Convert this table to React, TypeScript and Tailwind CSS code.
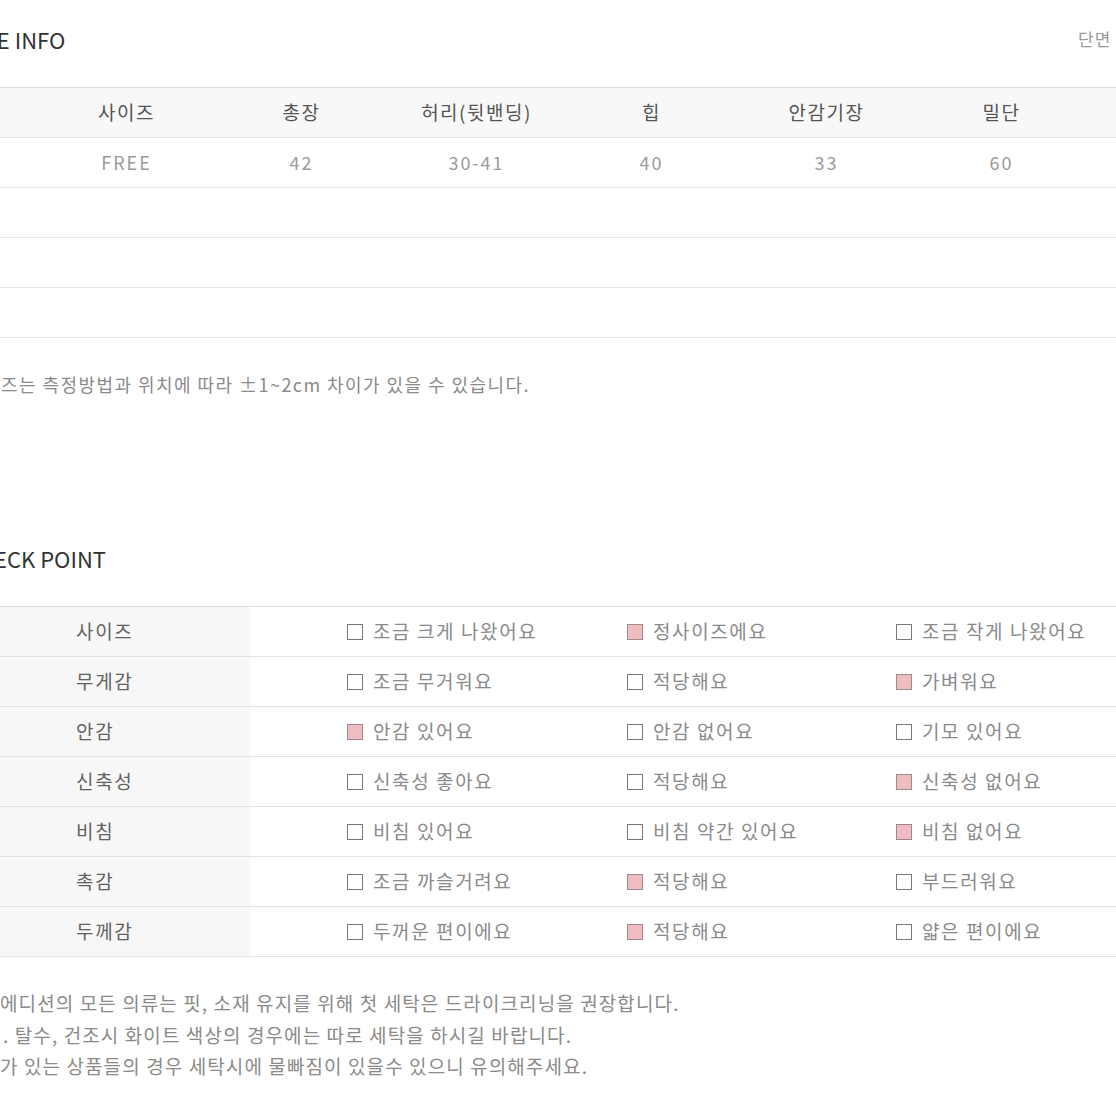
import React from "react";

const font = { fontFamily: '"Noto Sans CJK KR", "Noto Sans", sans-serif' };

const sizeHead = ["사이즈", "총장", "허리(뒷밴딩)", "힙", "안감기장", "밀단"];
const sizeRow = ["FREE", "42", "30-41", "40", "33", "60"];

type Opt = { label: string; on?: boolean };
const checks: { name: string; opts: Opt[] }[] = [
    { name: "사이즈", opts: [{ label: "조금 크게 나왔어요" }, { label: "정사이즈에요", on: true }, { label: "조금 작게 나왔어요" }] },
    { name: "무게감", opts: [{ label: "조금 무거워요" }, { label: "적당해요" }, { label: "가벼워요", on: true }] },
    { name: "안감", opts: [{ label: "안감 있어요", on: true }, { label: "안감 없어요" }, { label: "기모 있어요" }] },
    { name: "신축성", opts: [{ label: "신축성 좋아요" }, { label: "적당해요" }, { label: "신축성 없어요", on: true }] },
    { name: "비침", opts: [{ label: "비침 있어요" }, { label: "비침 약간 있어요" }, { label: "비침 없어요", on: true }] },
    { name: "촉감", opts: [{ label: "조금 까슬거려요" }, { label: "적당해요", on: true }, { label: "부드러워요" }] },
    { name: "두께감", opts: [{ label: "두꺼운 편이에요" }, { label: "적당해요", on: true }, { label: "얇은 편이에요" }] },
];

function Box({ on }: { on?: boolean }) {
    return (
        <span
            className={
                on
                    ? "inline-block w-[16px] h-[16px] border border-[#a08a8c] bg-[#eebcc1] shrink-0"
                    : "inline-block w-[16px] h-[16px] border border-[#777] bg-white shrink-0"
            }
        />
    );
}

export default function App() {
    return (
        <div className="w-[1116px] h-[1116px] overflow-hidden bg-white" style={font}>
            <div className="ml-[-35px] w-[1300px]">
                {/* --- size info title --- */}
                <div className="flex items-center h-[87px] pb-[9px]">
                    <h2 className="w-[1113px] text-[22px] text-[#333] ml-[-1px]">SIZE INFO</h2>
                    <span className="text-[17px] text-[#999] tracking-[1px] ml-[1px]">단면 (cm)</span>
                </div>

                {/* --- size table --- */}
                <div className="border-t border-[#d9d9d9]">
                    <div className="grid grid-cols-[73px_repeat(6,175px)_1fr] h-[50px] items-center bg-[#f8f8f8] border-b border-[#e3e3e3]">
                        <span />
                        {sizeHead.map((h) => (
                            <span key={h} className="text-center text-[19px] text-[#555] tracking-[1.5px] pl-[2px]">{h}</span>
                        ))}
                        <span />
                    </div>
                    <div className="grid grid-cols-[73px_repeat(6,175px)_1fr] h-[50px] items-center border-b border-[#e6e6e6]">
                        <span />
                        {sizeRow.map((v, i) => (
                            <span key={i} className="text-center text-[18px] text-[#9a9a9a] tracking-[2px] pl-[2px]">{v}</span>
                        ))}
                        <span />
                    </div>
                    {Array(3).fill(0).map((_, idx) => (
                        <div key={idx} className="h-[50px] border-b border-[#e6e6e6]" />
                    ))}
                </div>

                <p className="mt-[33px] text-[18px] text-[#8a8a8a] tracking-[1.45px] whitespace-nowrap">
                    사이즈는 측정방법과 위치에 따라 ±1~2cm 차이가 있을 수 있습니다.
                </p>

                {/* --- check point title --- */}
                <h2 className="mt-[144px] text-[22px] text-[#333] ml-[-1px]">CHECK POINT</h2>

                {/* --- check table --- */}
                <div className="mt-[31px] border-t border-[#dcdcdc]">
                    {checks.map((c) => (
                        <div
                            key={c.name}
                            className="grid grid-cols-[285px_280px_269px_1fr] h-[50px] items-center border-b border-[#e3e3e3]"
                        >
                            <span className="h-full flex items-center pl-[111px] bg-[#f7f7f7] text-[19px] text-[#626262] tracking-[1.7px]">
                                {c.name}
                            </span>
                            {c.opts.map((o, i) => (
                                <span key={i} className="flex items-center gap-[10px] pl-[97px] text-[19px] text-[#8a8a8a]">
                                    <Box on={o.on} />
                                    <span className="whitespace-nowrap tracking-[1.6px]">{o.label}</span>
                                </span>
                            ))}
                        </div>
                    ))}
                </div>
            </div>

            {/* --- washing notes --- */}
            <div className="mt-[30px] text-[19px] leading-[31.5px] text-[#8a8a8a] whitespace-nowrap tracking-[1.1px]">
                <p>에디션의 모든 의류는 핏, 소재 유지를 위해 첫 세탁은 드라이크리닝을 권장합니다.</p>
                <p className="pl-[3px]">. 탈수, 건조시 화이트 색상의 경우에는 따로 세탁을 하시길 바랍니다.</p>
                <p>가 있는 상품들의 경우 세탁시에 물빠짐이 있을수 있으니 유의해주세요.</p>
            </div>
        </div>
    );
}
